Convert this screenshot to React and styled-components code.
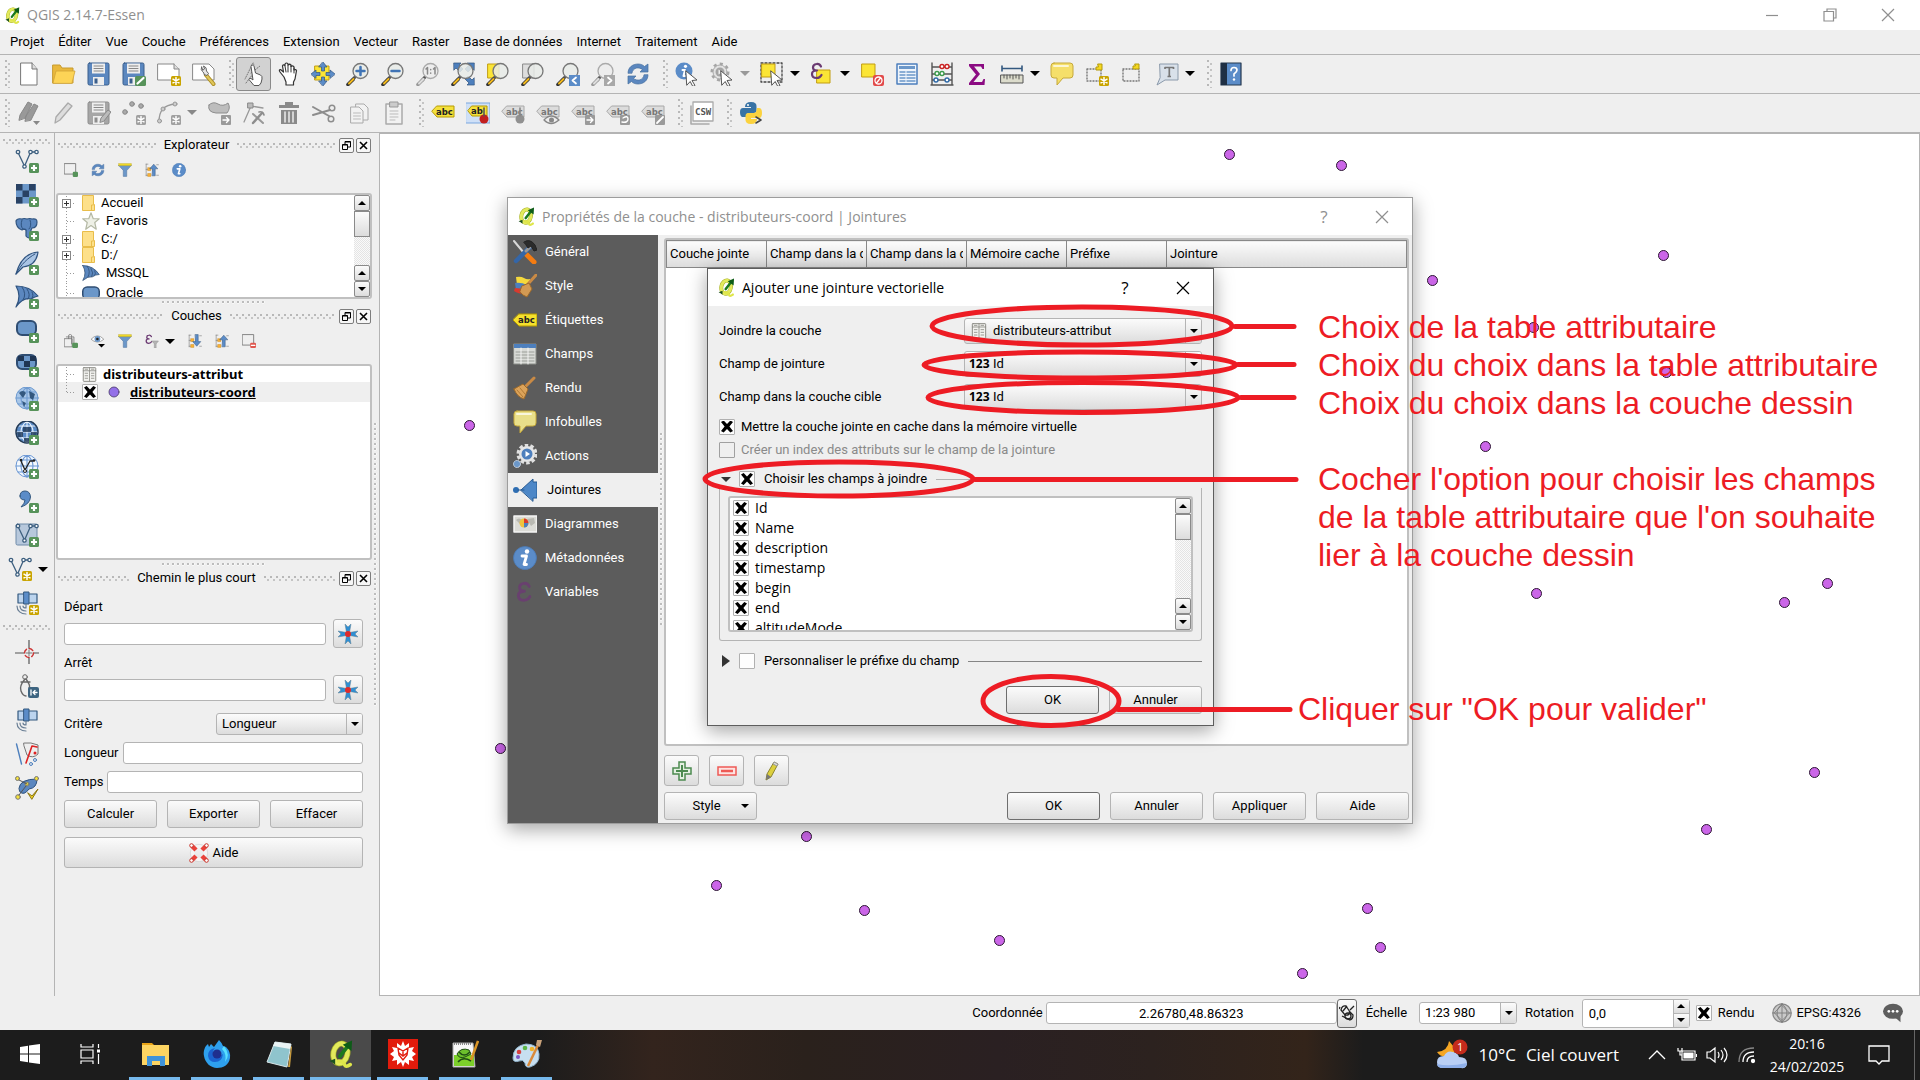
import React from "react";
import styled, { createGlobalStyle, css } from "styled-components";

/* ---------- tokens ---------- */
const UI = `Roboto, "Noto Sans", "Liberation Sans", sans-serif`;
const SYS = `"Open Sans", "Noto Sans", "Liberation Sans", sans-serif`;
const FACE = "#efefef";
const EDGE = "#b4b4b4";
const RED = "#ed1c24";

const Global = createGlobalStyle`
  *, *::before, *::after { box-sizing: border-box; }
  body { margin: 0; background: ${FACE}; font: 13px/16px ${UI}; color: #000; }
  button, input, select { font: inherit; color: inherit; margin: 0; }
  svg { display: block; flex: none; }
`;

/* ---------- icon pieces ---------- */
const Svg = ({ s = 24, children }) => (
  <svg width={s} height={s} viewBox="0 0 24 24" fill="none" strokeLinejoin="round" strokeLinecap="round" aria-hidden="true">
    {children}
  </svg>
);
const Plus = () => (
  <g><rect x="14" y="14" width="10" height="10" rx="1.5" fill="#57935a" /><path d="M19 16v6M16 19h6" stroke="#fff" strokeWidth="2.2" strokeLinecap="butt" /></g>
);
const Star = ({ c = "#c9a400", x = 0, y = 0 }) => (
  <g transform={`translate(${x} ${y})`}><rect x="14" y="14" width="10" height="10" rx="1.5" fill={c} /><path d="M19 15.500v7M16 17.200l6 3.600M22 17.200l-6 3.600" stroke="#fff" strokeWidth="1.500" /></g>
);
const ArrowBadge = ({ c = "#9a9a9a" }) => (
  <g><rect x="14" y="14" width="10" height="10" rx="1" fill={c} /><path d="M16 19h6M19.500 16.500L22 19l-2.500 2.500" stroke="#fff" strokeWidth="1.400" /></g>
);
const Lens = ({ gray, children, back }) => (
  <Svg>
    {back}
    <path d="M9 15l-3 3.500" stroke="#555" strokeWidth="3" />
    <path d="M7 17.500l-5 5" stroke={gray ? "#999" : "#333"} strokeWidth="3.600" />
    <path d="M7.500 17l-4.500 4.500" stroke={gray ? "#ddd" : "#f3b91c"} strokeWidth="2" />
    <circle cx="14.500" cy="9" r="7.500" fill={gray ? "#ececec" : "#e8ebe8"} fillOpacity=".85" stroke={gray ? "#aaa" : "#777"} strokeWidth="1.300" />
    {children}
  </Svg>
);
const Tag = ({ fill = "#f5e13c", line = "#b79b00", text = "#222", children }) => (
  <Svg>
    <path d="M6 5h17v11H6L1 10.500z" fill={fill} stroke={line} />
    <text x="5" y="13.500" fontSize="8.500" fontWeight="700" fontFamily="DejaVu Sans" fill={text}>abc</text>
    {children}
  </Svg>
);
const GTag = ({ children }) => <Tag fill="#dcdcdc" line="#a8a8a8" text="#777">{children}</Tag>;
const Cursor = ({ x = 0, y = 0 }) => (
  <path transform={`translate(${x} ${y})`} d="M11 9l11 9-5 .5 3 5-2.200 1-2.600-5L12 23z" fill="#fff" stroke="#555" strokeWidth="1" />
);
const Vee = ({ c = "#3d5f7f" }) => (
  <g stroke={c} strokeWidth="1.300"><path d="M3.500 4.500L9 16M10 16l5-11.500M17 3h3" /><circle cx="3" cy="3" r="1.700" fill="#fff" /><circle cx="15.500" cy="3" r="1.700" fill="#fff" /><circle cx="21.500" cy="3" r="1.700" fill="#fff" /><circle cx="9.500" cy="17.500" r="1.700" fill="#fff" /></g>
);
const QLogo = ({ s = 20 }) => (
  <Svg s={s}>
    <ellipse cx="11.500" cy="11.500" rx="6" ry="8.500" transform="rotate(12 11.500 11.500)" stroke="#a9b32a" strokeWidth="5" />
    <ellipse cx="11.500" cy="11.500" rx="6" ry="8.500" transform="rotate(12 11.500 11.500)" stroke="#e3ea5c" strokeWidth="3.800" />
    <path d="M10 18q4 0 5 3t5 0" stroke="#dfe64a" strokeWidth="3" />
    <path d="M11 14l7-9" stroke="#1d7a1d" strokeWidth="3.200" />
    <path d="M21.500 0.500l-.5 9-7.500-5.500z" fill="#0d5c17" />
    <path d="M2 18l5-2 0 5-2-1.500z" fill="#1c5220" />
  </Svg>
);
const Info = ({ s }) => (
  <Svg s={s}><circle cx="12" cy="12" r="11.500" fill="#5b8cc8" stroke="#4a79b4" strokeWidth=".8" /><path d="M9 10h4.500l-2.500 8.500h2.500" stroke="#fff" strokeWidth="2.800" /><circle cx="14" cy="5.500" r="2.200" fill="#fff" /></Svg>
);
const Refresh = ({ s }) => (
  <Svg s={s}>
    <path d="M2 11C2 5 7 2 12 2c3 0 5 1 6.500 2.500L22 2v8h-8l2.500-2.500C13 5 7 5 6 11z" fill="#5b87bf" stroke="#46709f" strokeWidth=".7" />
    <path d="M22 13c0 6-5 9-10 9-3 0-5-1-6.500-2.500L2 22v-8h8l-2.500 2.500C11 19 17 19 18 13z" fill="#5b87bf" stroke="#46709f" strokeWidth=".7" />
  </Svg>
);
const Funnel = ({ s }) => (
  <Svg s={s}><path d="M1 4h22l-8 9v10H9V13z" fill="#6b97c9" stroke="#4c6f98" strokeWidth=".8" /><rect x="1" y="1" width="22" height="3.500" fill="#f2dc27" stroke="#b59c10" strokeWidth=".6" /></Svg>
);
const TreeArrow = ({ s, down }) => (
  <Svg s={s}>
    <path d="M2 2v20M2 2h3M2 11h4M2 21h4M20 3h3M20 21h3" stroke="#777" />
    <rect x="5" y="8" width="5" height="5" fill="#f9b233" stroke="#c47e12" strokeWidth=".7" /><rect x="5" y="18" width="5" height="5" fill="#f9b233" stroke="#c47e12" strokeWidth=".7" />
    <path d={down ? "M12.500 1h5v12H22l-7 8-7-8h4.500z" : "M12.500 22h5V10H22l-7-8-7 8h4.500z"} fill="#5b8cc8" stroke="#32527a" strokeWidth=".8" />
  </Svg>
);
const TableIco = ({ s = 16 }) => (
  <Svg s={s}><rect x="2" y="1" width="20" height="22" rx="1" fill="#f3f3f0" stroke="#8b8b85" strokeWidth="1.500" /><path d="M2 6h20M12 1v22M5 3.500h4M15 3.500h4M5 10h4M15 10h4M5 14h4M15 14h4M5 18h4M15 18h4" stroke="#8b8b85" strokeWidth="1.300" /></Svg>
);
const Pen = ({ gray = "#aaa" }) => <path d="M3 22l1-6L16 2l4 3L8 19z" fill="#ddd" stroke={gray} strokeWidth="1.300" />;
const Sat = ({ children }) => (
  <Svg><path d="M3 3h7v9H3zM13 3h9v9h-9z" fill="#bcd4ee" stroke="#33587f" strokeWidth="1.200" /><path d="M9 1h5v12H9z" fill="#5b8cc8" stroke="#33587f" /><path d="M11 13v4M2 15c0 5 4 8 9 8M5 15c0 3 2 5 6 5M8 15c0 1 1 2 3 2" stroke="#6a7f95" strokeWidth="1.200" />{children}</Svg>
);
const Globe = ({ fill, line, children }) => (
  <Svg><circle cx="12" cy="11" r="11" fill={fill} stroke={line} /><path d="M1 11h22M3 5h18M3 17h18M12 0v22M12 0c-8 6-8 16 0 22M12 0c8 6 8 16 0 22" stroke={line} strokeWidth="1.100" />{children}</Svg>
);
const Checker = () => (
  <g fill="#294264"><rect x="1" y="1" width="6.500" height="6.500" /><rect x="14" y="1" width="6.500" height="6.500" /><rect x="7.500" y="7.500" width="6.500" height="6.500" /><rect x="1" y="14" width="6.500" height="6.500" /></g>
);
const Bubble = ({ s, c = "#f5df6a" }) => (
  <Svg s={s}><path d="M4 1h16q3 0 3 3v9q0 3-3 3h-7l-6 7v-7H4q-3 0-3-3V4q0-3 3-3z" fill={c} stroke="#c6a93a" /><path d="M4 4h14" stroke="#fff" strokeOpacity=".7" strokeWidth="2" /></Svg>
);
const Save = ({ c = "#5b87bf", l = "#3b5f8c" }) => (
  <g><rect x="1" y="1" width="21" height="22" rx="1.500" fill={c} stroke={l} /><rect x="5" y="1.500" width="13" height="10" fill="#eee" /><path d="M7 4h9M7 6.500h9M7 9h9" stroke="#888" strokeWidth="1" /><rect x="6" y="15" width="11" height="8" fill="#eee" /><rect x="7.500" y="16.500" width="3" height="5" fill={l} /></g>
);
const EPS = "M11 4.500Q9.500 1.500 6.500 2 3 2.500 3 5.500 3 8.500 7 8.500 2 8.500 2 12q0 4 4.500 4 3.500 0 5-3";
const Epsilon = ({ c = "#6b3a72" }) => <path d={EPS} stroke={c} strokeWidth="2.200" />;

const row1 = [
  [
    ["Nouveau", <Svg><path d="M4 1h11l5 6v16H4z" fill="#fff" stroke="#777" /><path d="M15 1v6h5" fill="#ddd" stroke="#777" /></Svg>],
    ["Ouvrir", <Svg><path d="M1 3h7l2 3h11v15H1z" fill="#e9b83c" stroke="#c79a2c" /><path d="M1 21L4 9h19l-3 12z" fill="#fdd456" stroke="#d1a337" strokeWidth=".8" /></Svg>],
    ["Enregistrer", <Svg><Save /></Svg>],
    ["Enregistrer sous", <Svg><Save /><rect x="13" y="14" width="11" height="10" rx="1.500" fill="#57935a" /><path d="M15.500 21.500l6-5.500" stroke="#fff" strokeWidth="2.200" /></Svg>],
    ["Nouveau composeur", <Svg><path d="M1 2h16l5 5v11H1z" fill="#fff" stroke="#888" /><path d="M17 2v5h5" stroke="#888" fill="#ddd" /><Star /></Svg>],
    ["Gestionnaire de composeurs", <Svg><path d="M1 2h16l5 5v11H1z" fill="#fff" stroke="#888" /><path d="M14 13l7.500 9" stroke="#a98a20" strokeWidth="4" /><path d="M14 13l7.500 9" stroke="#e0c65a" strokeWidth="2.200" /><path d="M9.500 5q-1 3 1 4.500t1.500 3l3 1 1.500-2-2-2.500q.5-4-3-5l1 3-1.500 1z" fill="#e6e6e6" stroke="#666" /></Svg>],
  ],
  [
    ["Toucher", <Svg><path d="M12 1L4 17M10 11l9-7M5 21l7-9" stroke="#777" strokeDasharray="1 1.500" /><path d="M11 3q1.500-1 2 1l1.500 7 5 2q2 1 1.500 4l-1 4-2 2.500h-5l-5-6q0-2 2-1l2 1.500-2-13.500q0-1.500 1-1.500z" fill="#fff" stroke="#555" /><circle cx="12" cy="2.500" r="1.300" fill="#999" /></Svg>, { on: true }],
    ["Déplacer", <Svg><path d="M8 15L4 10q-1.500-2.500.5-2.500L7.500 10 6.500 4q.5-2 2.500-.5V2q1.500-2 3 0v1q1.500-1.500 3 0v1.500q1.500-1.300 3 .3V8q2-1 2.500.7L19 17l-1.500 3v3H10v-3z" fill="#fff" stroke="#333" strokeWidth="1.200" /><path d="M9 4l1 6M12 3v7M15 4v6M18 6v5" stroke="#333" /></Svg>],
    ["Déplacer vers la sélection", <Svg><rect x="4" y="4" width="14" height="14" fill="#fbe536" stroke="#c29d10" /><path d="M12 0l4 5h-2.500v4h-3V5H8zM12 24l4-5h-2.500v-4h-3v4H8zM0 12l5-4v2.500h4v3H5V16zM24 12l-5-4v2.500h-4v3h4V16z" fill="#5b8cc8" stroke="#2f537f" strokeWidth=".7" /></Svg>],
    ["Zoom +", <Lens><path d="M14.500 5v8M10.500 9h8" stroke="#3f73b5" strokeWidth="2.500" /></Lens>],
    ["Zoom -", <Lens><path d="M10.500 9h8" stroke="#3f73b5" strokeWidth="2.500" /></Lens>],
    ["Zoom 1:1", <Lens gray><path d="M10 7l1.500-1.500V12M17.500 7L19 5.500V12M14.700 7.500v.2M14.700 11v.2" stroke="#888" strokeWidth="1.500" /></Lens>],
    ["Zoom sur l'étendue", <Lens back={<path d="M3 1h7L8 3l4 4-3 3-4-4-2 2zM23 1h-7l2 2-4 4 3 3 4-4 2 2zM23 23h-7l2-2-4-4 3-3 4 4 2-2z" fill="#4d7fbd" stroke="#2f537f" strokeWidth=".7" />} />],
    ["Zoom sur la sélection", <Lens back={<rect x="2" y="2" width="11" height="14" fill="#fbe536" stroke="#c29d10" />} />],
    ["Zoom sur la couche", <Lens back={<rect x="2" y="2" width="11" height="14" fill="#ddd" stroke="#888" />} />],
    ["Zoom précédent", <Lens><rect x="13" y="13" width="11" height="11" fill="#5b8cc8" /><path d="M20 15.500l-3.500 3 3.500 3" stroke="#fff" strokeWidth="1.800" /></Lens>],
    ["Zoom suivant", <Lens gray><rect x="13" y="13" width="11" height="11" fill="#a8a8a8" /><path d="M17 15.500l3.500 3-3.500 3" stroke="#fff" strokeWidth="1.800" /></Lens>],
    ["Rafraîchir", <Refresh />],
  ],
  [
    ["Identifier", <Svg><circle cx="9" cy="9" r="8.500" fill="#5b8cc8" /><path d="M7.500 8H10l-1.500 6H10" stroke="#fff" strokeWidth="2" /><circle cx="10.500" cy="4.300" r="1.600" fill="#fff" /><Cursor /></Svg>],
    ["Action", <Svg><circle cx="10" cy="10" r="8" stroke="#a5a5a5" strokeWidth="3" strokeDasharray="3 3.200" strokeLinecap="butt" /><circle cx="10" cy="10" r="7" stroke="#aaa" fill="#e2e2e2" /><circle cx="10" cy="10" r="4.500" fill="#a5a5a5" /><path d="M8.500 7.500l4 2.500-4 2.500z" fill="#eee" /><Cursor /></Svg>, { drop: "#999" }],
    ["Sélection", <Svg><rect x="1" y="1" width="21" height="19" stroke="#444" strokeDasharray="2 2" strokeWidth="1.300" /><rect x="2" y="2" width="13" height="13" fill="#fbe536" stroke="#c29d10" /><Cursor /></Svg>, { drop: "#000" }],
    ["Sélection par expression", <Svg><rect x="7" y="8" width="13" height="13" fill="#fbe536" stroke="#c29d10" /><Epsilon /></Svg>, { drop: "#000" }],
    ["Désélectionner", <Svg><rect x="2" y="2" width="13" height="13" fill="#fbe536" stroke="#c29d10" /><rect x="13" y="13" width="11" height="11" rx="2" fill="#e24a4a" /><circle cx="18.500" cy="18.500" r="3.500" stroke="#fff" strokeWidth="1.300" /><path d="M16.500 21l4-5" stroke="#fff" strokeWidth="1.300" /></Svg>],
    ["Table d'attributs", <Svg><rect x="2" y="2" width="20" height="20" fill="#eef4fb" stroke="#4d7fbd" strokeWidth="1.500" /><rect x="4" y="4" width="16" height="3" fill="#6b97c9" /><path d="M5 10h5M12 10h8M5 13h5M12 13h8M5 16h5M12 16h8M5 19h5M12 19h8" stroke="#6b97c9" strokeWidth="1.400" /></Svg>],
    ["Calculatrice", <Svg><path d="M2 1v22M22 1v22M2 5h20M2 12h20M2 18h20M1 23h22" stroke="#555" strokeWidth="1.400" /><g fill="#fff" strokeWidth="1.400"><g stroke="#c22"><circle cx="12" cy="4.500" r="2" /><circle cx="17" cy="4.500" r="2" /></g><g stroke="#3c9a4c"><circle cx="7" cy="11.500" r="2" /><circle cx="12" cy="11.500" r="2" /></g><g stroke="#2f6aa8"><circle cx="6" cy="18" r="2" /><circle cx="17" cy="18" r="2" /></g></g></Svg>],
    ["Statistiques", <Svg><path d="M4 2h15v5h-1.500L16 4.500H9l6 7.500-6.500 8H17l1.500-3H20l-.5 6H4v-2l7-8.500L4 4z" fill="#8b0b82" /></Svg>],
    ["Mesurer", <Svg><path d="M2 4v5M22 4v5M2 6.500h20" stroke="#33587f" strokeWidth="1.600" /><rect x="1" y="13" width="22" height="8" fill="#dcdccc" stroke="#555" /><path d="M4 13v3M7 13v4M10 13v3M13 13v4M16 13v3M19 13v4" stroke="#555" /></Svg>, { drop: "#000" }],
    ["Infobulles", <Bubble />],
    ["Nouveau signet", <Svg><path d="M2 7h14v12H2z" stroke="#777" strokeDasharray="1 2" strokeWidth="1.400" /><path d="M13 2h4v6h-6V5h2z" fill="#f5d820" stroke="#b39a0d" /><Star /></Svg>],
    ["Signets", <Svg><path d="M3 7h16v12H3z" stroke="#777" strokeDasharray="1 2" strokeWidth="1.400" /><path d="M15 2h4v5h-6V4h2z" fill="#f5d820" stroke="#b39a0d" /></Svg>],
    ["Annotation", <Svg><path d="M5 2h18v16H10l-8 5 3-7z" fill="#d9e1ea" stroke="#8b9aab" /><path d="M10 7V5.500h8.500V7M14.300 5.500v9M12.500 14.500h3.500" stroke="#777" strokeWidth="1.700" strokeLinecap="butt" /></Svg>, { drop: "#000" }],
  ],
  [["Aide", <Svg><rect x="2" y="1" width="20" height="22" fill="#5b8cc8" stroke="#25384f" strokeWidth="1.200" /><rect x="2" y="1" width="6" height="22" fill="#1f2f44" /><path d="M12 8.500q0-3 3-3t3 2.500q0 2-3 4v2" stroke="#fff" strokeWidth="1.700" /><circle cx="15" cy="17.500" r="1.200" fill="#fff" /></Svg>]],
];

const row2 = [
  [
    ["Modifications", <Svg><path d="M2 19l1-5L11 1l4 2-7 14zM8 20l1-5L17 3l4 2-7 14z" fill="#999" stroke="#888" /><path d="M16 20h7l-3.500 4z" fill="#888" /></Svg>],
    ["Basculer en édition", <Svg><Pen /></Svg>],
    ["Enregistrer les modifications", <Svg><Save c="#a6a6a6" l="#8d8d8d" /><path d="M13 21l1-4 7-8 3 2-7 9z" fill="#bbb" stroke="#888" /></Svg>],
    ["Ajouter une entité", <Svg><circle cx="3" cy="11" r="2.300" fill="#aaa" stroke="#888" /><circle cx="10" cy="3" r="2.300" fill="#aaa" stroke="#888" /><circle cx="19" cy="5" r="2.300" fill="#aaa" stroke="#888" /><Star c="#a0a0a0" /></Svg>],
    ["Ajouter une courbe", <Svg><path d="M2 21C2 10 6 4 19 3" stroke="#999" strokeWidth="1.300" /><circle cx="2.500" cy="20" r="2" fill="#ccc" stroke="#999" /><circle cx="6" cy="8" r="2" fill="#ccc" stroke="#999" /><circle cx="18" cy="3" r="2" fill="#ccc" stroke="#999" /><Star c="#a0a0a0" /></Svg>, { drop: "#888" }],
    ["Déplacer une entité", <Svg><path d="M2 4q4-4 9-1t10-1q3 5-1 10H9q-9-1-7-8z" fill="#bdbdbd" stroke="#8d8d8d" /><ArrowBadge /></Svg>],
    ["Outil de nœud", <Svg><path d="M2 21L9 5l12 2" stroke="#999" strokeWidth="1.300" /><rect x="6" y="2" width="5" height="5" fill="#bbb" stroke="#888" /><path d="M11 13l10 9" stroke="#999" strokeWidth="2" /><path d="M20 12l-9 10" stroke="#8d8d8d" strokeWidth="2.400" /><path d="M17 11q4-1 5 3" stroke="#8d8d8d" strokeWidth="1.600" /></Svg>],
    ["Supprimer", <Svg><path d="M2 4h20v3H2zM8 1h8v3H8zM4 9h16v14H4z" fill="#8a8a8a" /><path d="M8 11v10M12 11v10M16 11v10" stroke="#ededed" strokeWidth="1.500" /></Svg>],
    ["Couper", <Svg><path d="M1 6l16 9M1 14l17-5" stroke="#8d8d8d" strokeWidth="2" /><circle cx="20" cy="7" r="2.800" stroke="#8d8d8d" strokeWidth="1.500" /><circle cx="19" cy="18" r="2.800" stroke="#8d8d8d" strokeWidth="1.500" /></Svg>],
    ["Copier", <Svg><path d="M9 3h8l4 4v12H9z" fill="#f2f2f2" stroke="#aaa" /><path d="M4 6h8l4 4v12H4z" fill="#f2f2f2" stroke="#aaa" /><path d="M6.500 12h7M6.500 15h7M6.500 18h7" stroke="#bbb" /></Svg>],
    ["Coller", <Svg><path d="M4 3h16v20H4z" fill="#f2f2f2" stroke="#aaa" strokeWidth="1.500" /><path d="M8 1h8v5H8z" fill="#ccc" stroke="#999" /><path d="M8 10h8M8 13h8M8 16h8M8 19h5" stroke="#bbb" /></Svg>],
  ],
  [
    ["Étiquettes", <Tag />],
    ["Étiquettes épinglées", <Svg><rect x="0" y="2" width="24" height="20" fill="#cfe0f7" stroke="#7ba7df" /><path d="M6 5h15v10H6L2 10z" fill="#f5e13c" stroke="#b79b00" /><text x="5" y="13" fontSize="8.500" fontWeight="700" fontFamily="DejaVu Sans" fill="#222">ab</text><circle cx="18" cy="18" r="4.500" fill="#c22020" /><path d="M18 7v8" stroke="#555" strokeWidth="1.600" /></Svg>],
    ["Épingler", <GTag><circle cx="19" cy="18" r="4.500" fill="#909090" /><path d="M19 7v8" stroke="#888" strokeWidth="1.600" /></GTag>],
    ["Afficher", <GTag><path d="M8 19q7-8 15 0-8 7-15 0z" fill="#eee" stroke="#888" strokeWidth="1.300" /><circle cx="15.500" cy="19" r="2.500" fill="#888" /></GTag>],
    ["Déplacer l'étiquette", <GTag><ArrowBadge /></GTag>],
    ["Tourner l'étiquette", <GTag><rect x="14" y="14" width="10" height="10" rx="1" fill="#9a9a9a" /><path d="M16 21q6 1 6-3t-5-1" stroke="#fff" strokeWidth="1.400" /></GTag>],
    ["Modifier l'étiquette", <GTag><rect x="14" y="14" width="10" height="10" rx="1" fill="#9a9a9a" /><path d="M16 22l6-6" stroke="#fff" strokeWidth="1.800" /></GTag>],
  ],
  [["CSW", <Svg><path d="M1 5v18h18" stroke="#aaa" strokeWidth="1.600" /><rect x="3" y="1" width="20" height="19" fill="#fff" stroke="#aaa" strokeWidth="1.300" /><text x="5" y="14" fontSize="9" fontWeight="700" fontFamily="DejaVu Sans Mono" fill="#555">CSW</text></Svg>]],
  [["Console Python", <Svg><path d="M6 6q0-5 6-5t5.500 5v4q0 2-2.500 2h-5q-3 0-3 4H3q-2-1-2-5t3-4h8V6z" fill="#3873a5" /><path d="M18 7h2q3 0 3 5t-3 5h-8v1h6q0 5-6 5t-5.500-5v-3q0-3 3-3h5q3 0 3-3z" fill="#fbd23e" /><circle cx="9" cy="4" r="1" fill="#fff" /><path d="M17 16l5 3-5 3" stroke="#444" strokeWidth="1.500" /></Svg>]],
];

const layerTools = [
  ["Couche vecteur", <Svg><Vee /><Plus /></Svg>],
  ["Couche raster", <Svg><rect x="1" y="1" width="20" height="19.500" fill="#6b97c9" /><Checker /><Plus /></Svg>],
  ["PostGIS", <Svg><path d="M1 4q1-3 6-2 2-1 5 0 3-1 5 0 5-1 5 3 0 6-5 6l-1 2v7q-3 2-5-1v-6q-1-2-4 0Q1 11 1 4z" fill="#5b87bf" stroke="#2f537f" strokeWidth="1.200" /><path d="M7 3q-2 6 1 9l3 1M15 3q2 6-1 9" stroke="#2f537f" /><Plus /></Svg>],
  ["SpatiaLite", <Svg><path d="M1 23C4 12 10 2 23 1c-1 8-6 14-15 15z" fill="#a9c4e4" stroke="#2f537f" strokeWidth="1.200" /><path d="M1 23C6 13 13 7 20 3" stroke="#2f537f" /><Plus /></Svg>],
  ["MSSQL", <Svg><path d="M1 1q14 0 22 10-4 1-7 3-8-2-15 8Q7 11 1 1z" fill="#5b87bf" stroke="#2f537f" strokeWidth="1.200" /><path d="M7 2q5 7 1 13M12 4q4 6 1 10M17 7q2 4 0 6" stroke="#2f537f" /><Plus /></Svg>],
  ["Oracle", <Svg><rect x="2" y="2" width="19" height="14" rx="5" fill="#6b97c9" stroke="#2f4d72" strokeWidth="2" /><Plus /></Svg>],
  ["Oracle raster", <Svg><rect x="2" y="2" width="19" height="14" rx="5" fill="#6b97c9" stroke="#2f4d72" strokeWidth="2" /><path d="M3 3h6v5H3zM15 3h6v5h-6zM9 8h6v6H9z" fill="#1f3553" /><Plus /></Svg>],
  ["WMS", <Globe fill="#a9c7e8" line="#6f9bd0"><path d="M4 6q4-4 7 0l-3 5zM14 4l6 3-2 6-3-2zM7 14l4 2-2 4z" fill="#33587f" /><Plus /></Globe>],
  ["WCS", <Globe fill="#5b8cc8" line="#eaf2fb"><circle cx="12" cy="11" r="11" stroke="#223a57" strokeWidth="1.500" /><path d="M8 6h8v5H8zM2 11h6v5H3zM16 11h6l-1 5h-5zM9 17h6v4H9z" fill="#223a57" fillOpacity=".8" /><Plus /></Globe>],
  ["WFS", <Globe fill="#f3f8fd" line="#6b97d4"><path d="M6 6l4 9 5-9h3" stroke="#222" strokeWidth="1.300" /><circle cx="6" cy="5" r="1.300" fill="#222" /><circle cx="10" cy="16" r="1.500" fill="#fff" stroke="#222" /><circle cx="19" cy="5.500" r="1.300" fill="#222" /><Plus /></Globe>],
  ["Texte délimité", <Svg><path d="M5 7q0-5 5-5t5.500 6Q15 15 6 18q4-4 4-7-5 0-5-4z" fill="#5b8cc8" stroke="#33587f" /><Plus /></Svg>],
  ["Couche virtuelle", <Svg><rect x="1" y="1" width="21" height="21" rx="1.500" fill="#b7c8dc" stroke="#6f8aa8" /><Vee /><Plus /></Svg>],
  ["Nouvelle couche", <Svg><Vee /><Star /></Svg>, { drop: "#000" }],
  ["GPS", <Sat><Star /></Sat>],
];
const pluginTools = [
  ["Saisie de coordonnées", <Svg><path d="M14 0v24M0 13h24" stroke="#555" strokeWidth="1.200" /><circle cx="14" cy="13" r="4.500" stroke="#c33" strokeWidth="1.500" strokeDasharray="4 3" fill="#efefef" /><path d="M14 10v6M11 13h6" stroke="#777" /></Svg>],
  ["GPS outils", <Svg><circle cx="10" cy="3" r="2.300" stroke="#666" /><path d="M10 5Q4 12 6 17t5 5M11 5q5 7 3 9M6 8h9" stroke="#666" strokeWidth="1.400" /><rect x="13" y="13" width="11" height="11" rx="2" fill="#3d6480" /><path d="M16 16v5M18 18.500h4M20 16.500l-2 2 2 2" stroke="#fff" strokeWidth="1.300" /></Svg>],
  ["GPS temps réel", <Sat />],
  ["Topologie", <Svg><path d="M1.500 2l5 20" stroke="#4d7fbd" strokeWidth="1.400" /><path d="M9 1q7-1 14 2v9q-5 5-11 1L9 4z" fill="#eee" stroke="#777" /><path d="M11 21l6-17 5 1" stroke="#d22" strokeWidth="1.600" /><circle cx="20" cy="11" r="1.500" fill="#d22" /><circle cx="20" cy="18" r="1.500" stroke="#4d7fbd" /><circle cx="16" cy="22" r="1.500" stroke="#4d7fbd" /></Svg>],
  ["Vérificateur", <Svg><path d="M4 12q1-9 18-9 0 9-8 10-5 7-9 3z" fill="#5b87bf" stroke="#2f537f" /><g fill="#f5e13c" stroke="#777"><circle cx="2.500" cy="2.500" r="2" /><circle cx="21.500" cy="2.500" r="2" /><circle cx="12" cy="8" r="2" /><circle cx="3" cy="21" r="2.300" /></g><path d="M4 4l8 4M11 10l-7 9" stroke="#555" /><path d="M13 17l4 3 6-7-6 10z" fill="#f5d820" stroke="#8a7410" /></Svg>],
];

/* ---------- shared controls ---------- */
const raised = css`background: linear-gradient(#fbfbfb, #e9e9e9 60%, #dcdcdc);`;
const dots = css`
  background-image: radial-gradient(circle at 1px 1px, #b8b8b8 1px, transparent 1.5px), radial-gradient(circle at 1px 1px, #c4c4c4 1px, transparent 1.5px);
  background-size: 6px 6px;
  background-position: 0 0, 3px 3px;
`;
const VGrip = styled.span`flex: none; width: 5px; height: 28px; ${dots}`;
const HGrip = styled.span`flex: ${(p) => (p.$w ? "none" : 1)}; width: ${(p) => (p.$w ? p.$w + "px" : "auto")}; height: 5px; ${dots}`;
const Tri = styled.span`
  width: 0; height: 0; flex: none;
  border: 5px solid transparent;
  ${(p) => (p.$up ? "border-bottom-color: #000; border-top: 0;" : `border-top-color: ${p.$c || "#000"}; border-bottom: 0;`)}
  ${(p) => p.$small && "border-width: " + (p.$up ? "0 4px 4px" : "4px 4px 0") + ";"}
`;
const Push = styled.button`
  ${raised}
  flex: none;
  width: ${(p) => (p.$w ? p.$w + "px" : "auto")};
  height: ${(p) => p.$h || 28}px;
  padding: 0;
  border: 1px solid ${(p) => (p.$main ? "#6e6e6e" : EDGE)};
  border-radius: 3px;
  display: flex; align-items: center; justify-content: center; gap: ${(p) => p.$gap || 4}px;
`;
const Field = styled.input`
  flex: 1; min-width: 0; width: 100%; height: 22px; padding: 0 6px;
  border: 1px solid ${EDGE}; border-radius: 3px; background: #fff; text-align: ${(p) => p.$align || "left"};
`;
const ComboBox = styled.span`
  position: relative; display: block; flex: none; width: ${(p) => p.$w}px; height: ${(p) => p.$h || 22}px;
  & > select {
    appearance: none; width: 100%; height: 100%;
    padding: 0 18px 0 ${(p) => p.$pad || 5}px;
    border: 1px solid ${EDGE}; border-radius: 3px;
    ${(p) => (p.$white ? "background: #fff;" : raised)}
  }
`;
const FieldWrap = styled.span`display: flex; flex: none; width: 291px;`;
const ComboArrow = styled.span`
  position: absolute; right: 1px; top: 1px; bottom: 1px; width: 16px;
  border-left: 1px solid ${EDGE}; border-radius: 0 2px 2px 0; pointer-events: none;
  display: flex; align-items: center; justify-content: center; ${raised}
`;
const ComboMark = styled.span`
  position: absolute; left: ${(p) => p.$x}px; top: 0; bottom: 0; display: flex; align-items: center; pointer-events: none;
  font: 700 12px/16px "Noto Sans", sans-serif;
`;
const Combo = ({ w, h, white, pad, mark, markX = 5, id, value }) => (
  <ComboBox $w={w} $h={h} $white={white} $pad={pad}>
    <select id={id} defaultValue={value}><option>{value}</option></select>
    {mark && <ComboMark $x={markX}>{mark}</ComboMark>}
    <ComboArrow><Tri $small /></ComboArrow>
  </ComboBox>
);
const Check = styled.input.attrs({ type: "checkbox" })`
  appearance: none; flex: none; width: 16px; height: 16px; margin: 0;
  border: 1px solid ${(p) => (p.disabled ? "#a0a0a0" : "#b0b0b0")}; border-radius: 1px;
  background: ${(p) => (p.disabled ? FACE : "#fdfdfd")};
  &:checked::after {
    content: ""; display: block; width: 12px; height: 12px; margin: 1px; background: #000;
    clip-path: polygon(0 12%, 22% 0, 50% 30%, 78% 0, 100% 12%, 70% 50%, 100% 88%, 78% 100%, 50% 70%, 22% 100%, 0 88%, 30% 50%);
  }
`;
const Scroll = styled.span`
  flex: none; width: 16px; display: flex; flex-direction: column;
  background: repeating-conic-gradient(#e4e4e4 0 25%, #fafafa 0 50%) 0 0 / 2px 2px;
`;
const ScrollBtn = styled.button`
  ${raised} width: 16px; height: 16px; padding: 0; border: 1px solid #8a8a8a; border-radius: 2px;
  display: flex; align-items: center; justify-content: center;
`;
const Thumb = styled.span`${raised} height: 26px; border: 1px solid #8a8a8a; margin-bottom: auto;`;
const ScrollBar = () => (
  <Scroll>
    <ScrollBtn aria-label="Haut"><Tri $up $small /></ScrollBtn><Thumb />
    <ScrollBtn aria-label="Page haut"><Tri $up $small /></ScrollBtn><ScrollBtn aria-label="Bas"><Tri $small /></ScrollBtn>
  </Scroll>
);

/* ---------- main window ---------- */
const Desktop = styled.div`position: relative; min-height: 100vh; display: flex; flex-direction: column; overflow: hidden;`;
const TitleBar = styled.header`
  height: ${(p) => p.$h || 30}px; background: #fff; flex: none; display: flex; align-items: center; gap: 6px;
  padding: 0 ${(p) => p.$end || 4}px 0 ${(p) => p.$pad || 0}px; font: 14px/20px ${SYS}; color: ${(p) => (p.$active ? "#000" : "#8f8f8f")};
`;
const WinTitle = styled.h1`flex: 1; margin: 0; font: inherit;`;
const Caption = styled.button`
  width: 52px; height: 100%; border: 0; padding: 0; background: none; font: 17px/20px ${SYS};
  display: flex; align-items: center; justify-content: center;
`;
const CapIcon = ({ d }) => <svg width="14" height="14" viewBox="0 0 14 14" fill="none" stroke="currentColor" strokeWidth="1.200"><path d={d} /></svg>;
const CROSS = "M1 1l12 12M13 1L1 13";

const MenuBar = styled.nav`height: 25px; flex: none; padding-left: 10px; display: flex; align-items: center; gap: 14px; border-bottom: 1px solid ${EDGE};`;
const MenuLink = styled.a`color: #000; text-decoration: none;`;
const ToolRow = styled.div`height: 39px; flex: none; display: flex; align-items: center; border-bottom: 1px solid ${EDGE}; padding-bottom: 1px;`;
const GripSlot = styled.span`width: ${(p) => (p.$first ? 12 : 14)}px; display: flex; justify-content: flex-end; padding-right: 2px;`;
const Tool = styled.button`
  width: ${(p) => (p.$drop ? 50 : 35)}px; height: 34px; padding: 0 0 0 4px; flex: none;
  border: 1px solid ${(p) => (p.$on ? "#8a8a8a" : "transparent")}; border-radius: 3px;
  background: ${(p) => (p.$on ? "#d2d2d2" : "none")}; display: flex; align-items: center; gap: 6px;
`;
const Tools = ({ groups, label }) => (
  <ToolRow role="toolbar" aria-label={label}>
    {groups.map((g, i) => (
      <React.Fragment key={i}>
        <GripSlot $first={i === 0}><VGrip /></GripSlot>
        {g.map(([name, icon, o = {}]) => (
          <Tool key={name} aria-label={name} $drop={o.drop} $on={o.on}>{icon}{o.drop && <Tri $c={o.drop} />}</Tool>
        ))}
      </React.Fragment>
    ))}
  </ToolRow>
);
const Main = styled.main`flex: 1; display: flex; min-height: 0;`;
const SideTools = styled.div`
  width: 55px; flex: none; border-right: 1px solid ${EDGE}; padding: 6px 3px 0;
  display: flex; flex-direction: column;
`;
const SideTool = styled.button`
  height: 34px; width: 100%; border: 0; background: none; flex: none; display: flex; align-items: center; gap: 6px;
  padding: 0 0 0 ${(p) => (p.$drop ? 5 : 12)}px;
`;
const GripLine = styled.span`display: flex; height: ${(p) => p.$h}px; flex: none; align-items: center; justify-content: center;`;
const Docks = styled.aside`width: 317px; flex: none; display: flex; flex-direction: column; padding-top: 2px;`;
const DockHead = styled.header`height: 20px; display: flex; align-items: center; gap: 8px; padding-left: 3px; flex: none;`;
const DockTitle = styled.h2`margin: 0; font: inherit;`;
const DockBtns = styled.span`display: flex; gap: 2px; margin-left: -4px; padding-right: 1px;`;
const DockBtn = styled.button`
  width: 15px; height: 15px; padding: 0; border: 1px solid #7d7d7d; border-radius: 2px; background: #f6f6f6;
  display: flex; align-items: center; justify-content: center;
`;
const Dock = ({ title, children }) => (
  <>
    <DockHead>
      <HGrip /><DockTitle>{title}</DockTitle><HGrip />
      <DockBtns>
        <DockBtn aria-label="Détacher"><svg width="9" height="9" viewBox="0 0 9 9" fill="none" stroke="#000"><path d="M3 3V.5h5.500V6H6M3 1h5.500M.5 3.500h5v5h-5zM.5 4h5" /></svg></DockBtn>
        <DockBtn aria-label="Fermer"><svg width="9" height="9" viewBox="0 0 9 9" stroke="#000" strokeWidth="1.600"><path d="M1 1l7 7M8 1L1 8" /></svg></DockBtn>
      </DockBtns>
    </DockHead>
    {children}
  </>
);
const DockTools = styled.div`height: 38px; flex: none; display: flex; align-items: center; gap: 13px; padding: 0 0 8px 9px;`;
const MiniTool = styled.button`border: 0; padding: 0; background: none; display: flex; align-items: center; gap: 6px;`;
const Box = styled.div`
  flex: none; height: ${(p) => p.$h}px; margin-left: 1px; background: #fff; border: 2px solid #c0c0c0; border-radius: 3px; display: flex; overflow: hidden;
`;
const Tree = styled.ul`list-style: none; margin: 0; padding: 0; flex: 1; overflow: hidden;`;
const Node = styled.li`
  height: ${(p) => p.$h}px; display: flex; align-items: center; padding-left: 1px; gap: 6px;
  background: ${(p) => (p.$sel ? FACE : "none")};
  font: ${(p) => (p.$bold ? `700 13px/18px "Noto Sans", sans-serif` : "inherit")};
  text-decoration: ${(p) => (p.$sel ? "underline" : "none")};
`;
const Twig = ({ plus, last }) => (
  <svg width="17" height="20" viewBox="0 0 17 20" fill="none" stroke="#999">
    <path d={last ? "M7.500 0v10" : "M7.500 0v20"} strokeDasharray="1 2" /><path d="M8 10.500h9" strokeDasharray="1 2" />
    {plus && <g><rect x="3.500" y="6.500" width="8" height="8" fill="#fff" stroke="#888" /><path d="M5 10.500h5M7.500 8v5" stroke="#333" /></g>}
  </svg>
);
const Folder = () => <svg width="13" height="16" viewBox="0 0 13 16"><path d="M.5.500h11v9h1v6H.5z" fill="#fde08a" stroke="#e9bd4a" /><path d="M9.500 15.500V10h2" fill="none" stroke="#e9bd4a" /></svg>;

const Form = styled.form`display: flex; flex-direction: column; padding: 10px 9px 0;`;
const Row = styled.div`display: flex; align-items: center; gap: ${(p) => p.$gap || 7}px; height: ${(p) => p.$h || 29}px;`;
const Lbl = styled.label`flex: none; ${(p) => p.$block && "height: 21px; line-height: 18px;"} ${(p) => p.$push && "margin-right: auto;"}`;
const Bottom = styled.div`display: grid; grid-template-columns: repeat(3, 1fr); gap: 9px 10px; padding-top: 4px; & > :last-child { grid-column: 1 / -1; }`;
const SplitV = styled.div`width: ${(p) => p.$w || 7}px; flex: none; display: flex; align-items: center; justify-content: center;`;
const Dotted = styled.span`
  width: ${(p) => (p.$v ? 3 : 104)}px; height: ${(p) => (p.$v ? p.$v : 3)}px;
  background: radial-gradient(circle at 1px 1px, #bdbdbd 1px, #fafafa 1.5px, transparent 2px) 0 0 / 5px 5px;
`;
const MapView = styled.section`position: relative; flex: 1; background: #fff; border: 1px solid ${EDGE};`;
const Pin = styled.i`
  position: absolute; left: ${(p) => p.$x}px; top: ${(p) => p.$y}px; width: 11px; height: 11px; margin: -6px;
  border: 1px solid #2c1633; border-radius: 50%; background: #cb66e8;
`;
const pins = [[1230, 155], [1342, 166], [1664, 256], [1433, 281], [1534, 328], [1667, 373], [1486, 447], [470, 426], [1537, 594], [1785, 603], [1828, 584], [501, 749], [1815, 773], [1707, 830], [807, 837], [717, 886], [865, 911], [1000, 941], [1368, 909], [1381, 948], [1303, 974]];

/* ---------- status bar and taskbar ---------- */
const Status = styled.footer`height: 34px; flex: none; display: flex; align-items: center; justify-content: flex-end; padding-right: 17px;`;
const Gap = styled.span`width: ${(p) => p.$w || 0}px; height: ${(p) => p.$h || 0}px; flex: none; display: block;`;
const Spin = styled.span`
  display: grid; grid-template-columns: 1fr 16px; width: 108px; height: 29px; border: 1px solid ${EDGE}; border-radius: 3px; background: #fff;
  & > input { border: 0; height: 27px; }
`;
const SpinCol = styled.span`display: grid; border-left: 1px solid ${EDGE};`;
const SpinBtn = styled.button`border: 0; padding: 0; ${raised} display: flex; align-items: center; justify-content: center; & + & { border-top: 1px solid ${EDGE}; }`;
const TaskBar = styled.footer`
  height: 50px; flex: none; display: flex; align-items: stretch; color: #fff; font: 14px/23px ${SYS};
  background: linear-gradient(90deg, #1c1c1c 0 28%, #33241d 34%, #2a211c 42%, #2a2022 52%, #2c221f 60%, #33241a 68%, #1c1c1c 71% 100%);
`;
const Task = styled.button`
  width: ${(p) => p.$w}px; margin-right: ${(p) => p.$m || 0}px; height: 50px; border: 0; padding: 0;
  background: ${(p) => (p.$on ? "#4a4a4a" : "none")}; border-bottom: 3px solid ${(p) => (p.$open ? "#76b9ed" : "transparent")};
  display: flex; align-items: center; justify-content: center; color: #fff;
`;
const Tray = styled.div`margin-left: auto; display: flex; align-items: center; padding-right: 5px;`;
const Weather = styled.span`display: flex; align-items: center; gap: 10px; font: 17px/24px ${SYS}; margin-right: 29px;`;
const Clock = styled.time`display: flex; flex-direction: column; align-items: center; width: 84px; margin: 0 19px 0 9px;`;

/* ---------- dialogs ---------- */
const Dialog = styled.section`
  position: absolute; left: ${(p) => p.$x}px; top: ${(p) => p.$y}px; width: ${(p) => p.$w}px;
  border: 1px solid ${(p) => (p.$front ? "#5d5d5d" : "#9d9d9d")}; background: ${FACE};
  box-shadow: 0 5px 18px rgba(0, 0, 0, 0.36);
`;
const Split = styled.div`display: flex;`;
const Tabs = styled.nav`width: 150px; height: 588px; background: #5c5c5c; flex: none;`;
const Tab = styled.a`
  display: flex; align-items: center; gap: ${(p) => (p.$on ? 10 : 8)}px; height: 34px; padding-left: 5px; text-decoration: none;
  color: ${(p) => (p.$on ? "#000" : "#fff")}; background: ${(p) => (p.$on ? FACE : "none")};
`;
const IcoBox = styled.span`width: 24px; height: 24px; display: flex; align-items: center; justify-content: center;`;
const Pane = styled.div`flex: 1; display: flex; flex-direction: column; padding: 3px 3px 2px 0;`;
const JoinBox = styled.div`height: 508px; background: #fff; border: 2px solid #c0c0c0; border-radius: 3px;`;
const JoinTable = styled.table`
  width: 100%; table-layout: fixed; border-collapse: collapse;
  & th { ${raised} height: 27px; padding: 0 3px; border: 1px solid #888; text-align: left; font-weight: 400; white-space: nowrap; overflow: hidden; }
  & th span { display: block; overflow: hidden; }
`;
const BtnRow = styled.div`display: flex; gap: 10px; padding-top: ${(p) => p.$t}px;`;
const Spacer = styled.span`flex: 1;`;
const Body = styled.div`padding: 8px 11px 11px;`;
const FormLine = styled.div`display: flex; align-items: center; justify-content: space-between; height: 33px;`;
const CheckLine = styled.label`display: flex; align-items: center; gap: 6px; height: 23px; color: ${(p) => (p.$off ? "#8a8a8a" : "#000")};`;
const GroupHead = styled.div`
  flex: 1; display: flex; align-items: center; gap: 9px; height: 20px; padding-left: 3px;
  & > hr { flex: 1; margin: 0; border: 0; border-top: 1px solid ${(p) => (p.$dark ? "#858585" : EDGE)}; }
`;
const Expand = styled.button`border: 0; background: none; padding: 0; width: 8px; display: flex; justify-content: center;`;
const GroupBody = styled.div`border: 1px solid ${EDGE}; border-top: 0; border-radius: 0 0 3px 3px; margin-top: -1px; padding: 8px;`;
const FieldBox = styled.div`height: 136px; display: flex; background: #fff; border: 2px solid #c0c0c0; border-radius: 3px;`;
const FieldList = styled.ul`
  flex: 1; list-style: none; margin: 0; padding: 0 0 0 3px; overflow: hidden; font: 14px/20px ${SYS};
  & label { display: flex; align-items: center; gap: 6px; height: 20px; }
`;

/* ---------- notes drawn over the windows ---------- */
const Notes = styled.div`position: absolute; inset: 0; pointer-events: none;`;
const Ink = styled.svg`position: absolute; left: 0; top: 0; overflow: visible;`;
const Note = styled.p`
  position: absolute; left: ${(p) => p.$x}px; top: ${(p) => p.$y}px; margin: 0; white-space: pre-line;
  font: 32px/38px "Liberation Sans", Arial, sans-serif; color: ${RED};
`;

const tabs = [
  ["Général", <Svg><path d="M1 1l10 12" stroke="#d8d8d8" strokeWidth="2" /><path d="M12 13l9 9" stroke="#f47c12" strokeWidth="5" /><path d="M17 7L3 21" stroke="#3466a8" strokeWidth="4.500" /><path d="M17 7l-4 4" stroke="#999" strokeWidth="3" /><path d="M11 2q6-4 11 3l2 5-3 1-3-5-3 2-2-3z" fill="#2b2b2b" stroke="#222" /></Svg>],
  ["Style", <Svg><path d="M3 3q5-1 8 1t6 1v6H4z" fill="#f5d93c" /><path d="M2 9q6-1 12 2v5H3z" fill="#4d7fbd" /><path d="M2 14q5 0 12 2l-2 4q-7 0-11-3z" fill="#d83a2f" /><path d="M23 1l-8 9" stroke="#c98a45" strokeWidth="3" /><path d="M9 12l7-3 3 6-5 8q-4-1-7-5z" fill="#d29a54" stroke="#9c6a2b" /></Svg>],
  ["Étiquettes", <Svg><path d="M6 6h18v12H6L0 12z" fill="#f5e02c" stroke="#b79b00" /><text x="5" y="15" fontSize="8.500" fontWeight="700" fontFamily="DejaVu Sans" fill="#222">abc</text></Svg>],
  ["Champs", <Svg><rect x="1" y="2" width="22" height="20" fill="#d8dad6" stroke="#8a8d88" /><rect x="1" y="2" width="22" height="4" fill="#4d7fbd" /><path d="M3 10h18M3 13h18M3 16h18M3 19h18" stroke="#9a9d98" /><path d="M8 6v16M15 6v16" stroke="#f5f5f5" /></Svg>],
  ["Rendu", <Svg><path d="M21 2l-8 8" stroke="#c98a45" strokeWidth="3" /><path d="M1 13l9-5 5 5-4 10q-7-2-10-10z" fill="#dca35a" stroke="#9c6a2b" /><path d="M4 14l6 7M7 12l5 6" stroke="#b07a35" /></Svg>],
  ["Infobulles", <Bubble c="#e9df8a" />],
  ["Actions", <Svg><circle cx="14" cy="10" r="9" stroke="#e0e0e0" strokeWidth="3" strokeDasharray="3.500 2.200" strokeLinecap="butt" /><circle cx="14" cy="10" r="8" fill="#e6e6e6" /><circle cx="14" cy="10" r="5.500" fill="#4d7fbd" /><path d="M12.500 7l4.500 3-4.500 3z" fill="#fff" /><circle cx="4" cy="20" r="3.500" fill="#6b97c9" stroke="#cfd8e3" strokeDasharray="1.500 1" /></Svg>],
  ["Jointures", <Svg><path d="M8 12L20 1v3h4v16h-4v3z" fill="#4d87c7" stroke="#275a92" /><circle cx="3" cy="12" r="3" fill="#2f6eb3" /><path d="M5 12h6" stroke="#275a92" /></Svg>],
  ["Diagrammes", <Svg><rect x="1" y="4" width="23" height="16" fill="#dcdcd7" stroke="#f5f5f5" strokeWidth="1.500" /><path d="M3 8q3-3 6 0l-2 4zM14 7l7-1 1 5-4 3z" fill="#b9b9b2" /><circle cx="11" cy="11" r="4.500" fill="#f0c33c" /><path d="M11 11V6.500a4.500 4.500 0 0 1 4.500 4.500z" fill="#d83a2f" /><path d="M11 11h4.500a4.500 4.500 0 0 1-4.500 4.500z" fill="#4d7fbd" /></Svg>],
  ["Métadonnées", <Info />],
  ["Variables", <Svg><g transform="translate(3 1) scale(1.2)"><path d={EPS} stroke="#69406f" strokeWidth="2.400" /></g></Svg>],
];
const fields = ["Id", "Name", "description", "timestamp", "begin", "end", "altitudeMode"];

const PickIcon = () => (
  <svg width="20" height="20" viewBox="0 0 20 20" aria-hidden="true"><path d="M7 0l3 3 3-3-1.500 8.500L20 7l-3 3 3 3-8.500-1.500L13 20l-3-3-3 3 1.500-8.500L0 13l3-3-3-3 8.500 1.500z" fill="#2f8fd3" stroke="#5f7f93" strokeWidth=".5" /><circle cx="10" cy="10" r="3" fill="#e02b2b" /></svg>
);
const Buoy = () => (
  <svg width="20" height="20" viewBox="0 0 20 20" fill="none" aria-hidden="true"><circle cx="10" cy="10" r="6.500" stroke="#f4f4f4" strokeWidth="4" /><circle cx="10" cy="10" r="8.700" stroke="#ccc" strokeWidth=".6" /><path d="M3 3l4 4M17 3l-4 4M3 17l4-4M17 17l-4-4" stroke="#e8423a" strokeWidth="4.500" /><g stroke="#c8352c" fill="#fff"><circle cx="2.500" cy="2.500" r="1.800" /><circle cx="17.500" cy="2.500" r="1.800" /><circle cx="2.500" cy="17.500" r="1.800" /><circle cx="17.500" cy="17.500" r="1.800" /></g></svg>
);

const Explorer = () => (
  <Dock title="Explorateur">
    <DockTools>
      <MiniTool aria-label="Ajouter"><Svg s={14}><rect x="1" y="1" width="19" height="18" stroke="#777" strokeWidth="1.500" /><rect x="15" y="15" width="9" height="9" rx="2" fill="#57935a" /></Svg></MiniTool>
      <MiniTool aria-label="Rafraîchir"><Refresh s={14} /></MiniTool>
      <MiniTool aria-label="Filtrer"><Funnel s={14} /></MiniTool>
      <MiniTool aria-label="Replier"><TreeArrow s={14} /></MiniTool>
      <MiniTool aria-label="Propriétés"><Info s={14} /></MiniTool>
    </DockTools>
    <Box $h={106}>
      <Tree>
        <Node $h={16}><Twig plus /><Folder />Accueil</Node>
        <Node $h={20}><Twig /><Svg s={18}><path d="M12 1l3 8h8l-6 5 2 9-7-5-7 5 2-9-6-5h8z" fill="#eef0e6" stroke="#b5b9a5" strokeWidth="1.600" /></Svg>Favoris</Node>
        <Node $h={16}><Twig plus /><Folder />C:/</Node>
        <Node $h={16}><Twig plus /><Folder />D:/</Node>
        <Node $h={20}><Twig /><Svg s={18}><path d="M1 2q14 0 22 12-5 0-9 3-6-1-13 5Q7 12 1 2z" fill="#5b87bf" stroke="#2f4d72" /><path d="M7 3q5 7 1 14M12 6q4 6 1 11M17 9q2 4 0 6" stroke="#2f4d72" /></Svg>MSSQL</Node>
        <Node $h={20}><Twig /><Svg s={18}><rect x="1" y="4" width="22" height="16" rx="6" fill="#6b97c9" stroke="#2f4d72" strokeWidth="2" /></Svg>Oracle</Node>
      </Tree>
      <ScrollBar />
    </Box>
  </Dock>
);
const Layers = () => (
  <Dock title="Couches">
    <DockTools>
      <MiniTool aria-label="Ajouter un groupe"><Svg s={14}><path d="M1 8h13v14H1zM4 5h13v14M8 8V2q3-3 5 0v15" stroke="#777" strokeWidth="1.400" /><rect x="14" y="15" width="10" height="9" rx="2" fill="#57935a" /></Svg></MiniTool>
      <MiniTool aria-label="Visibilité"><Svg s={14}><path d="M0 9q11-12 22 0-11 10-22 0z" fill="#fff" stroke="#999" strokeWidth="1.500" /><circle cx="11" cy="8.500" r="5" fill="#6b97c9" /><circle cx="11" cy="8.500" r="2.200" fill="#222" /><path d="M12 17h12l-6 6z" fill="#000" /></Svg></MiniTool>
      <MiniTool aria-label="Filtrer"><Funnel s={14} /></MiniTool>
      <MiniTool aria-label="Filtrer par expression"><Svg s={14}><Epsilon /><path d="M12 12h11l-4 5v7h-3v-7z" fill="#b5b5b5" stroke="#999" /></Svg><Tri /></MiniTool>
      <MiniTool aria-label="Déplier"><TreeArrow s={14} down /></MiniTool>
      <MiniTool aria-label="Replier"><TreeArrow s={14} /></MiniTool>
      <MiniTool aria-label="Supprimer"><Svg s={14}><rect x="1" y="1" width="19" height="18" stroke="#777" strokeWidth="1.500" /><rect x="14" y="15" width="10" height="9" rx="2" fill="#e0574f" /><path d="M16 19.500h6" stroke="#fff" strokeWidth="2" /></Svg></MiniTool>
    </DockTools>
    <Box $h={196}>
      <Tree>
        <Node $h={16} $bold><Twig /><TableIco s={15} />distributeurs-attribut</Node>
        <Node $h={20} $bold $sel><Twig last /><Check defaultChecked aria-label="distributeurs-coord" /><Svg s={20}><circle cx="12" cy="12" r="6" fill="#9370e8" stroke="#4b3b6b" /></Svg>distributeurs-coord</Node>
      </Tree>
    </Box>
  </Dock>
);
const Path = () => (
  <Dock title="Chemin le plus court">
    <Form onSubmit={(e) => e.preventDefault()}>
      <Lbl $block htmlFor="dep">Départ</Lbl>
      <Row><Field id="dep" /><Push type="button" $w={30} $h={29} aria-label="Choisir le départ"><PickIcon /></Push></Row>
      <Gap $h={6} />
      <Lbl $block htmlFor="arr">Arrêt</Lbl>
      <Row><Field id="arr" /><Push type="button" $w={30} $h={29} aria-label="Choisir l'arrivée"><PickIcon /></Push></Row>
      <Gap $h={5} />
      <Row><Lbl $push htmlFor="crit">Critère</Lbl><Combo id="crit" w={147} value="Longueur" /></Row>
      <Row $gap={4}><Lbl htmlFor="lon">Longueur</Lbl><Field id="lon" /></Row>
      <Row $gap={4}><Lbl htmlFor="tmp">Temps</Lbl><Field id="tmp" /></Row>
      <Bottom>
        <Push type="button">Calculer</Push><Push type="button">Exporter</Push><Push type="button">Effacer</Push>
        <Push type="button" $h={31}><Buoy />Aide</Push>
      </Bottom>
    </Form>
  </Dock>
);

const Properties = () => (
  <Dialog $x={507} $y={197} $w={906} aria-label="Propriétés de la couche">
    <TitleBar $h={37} $pad={9}>
      <QLogo s={19} /><WinTitle>Propriétés de la couche - distributeurs-coord | Jointures</WinTitle>
      <Caption aria-label="Aide">?</Caption><Caption aria-label="Fermer"><CapIcon d={CROSS} /></Caption>
    </TitleBar>
    <Split>
      <Tabs>{tabs.map(([t, icon]) => <Tab key={t} href="#" $on={t === "Jointures"}><IcoBox>{icon}</IcoBox>{t}</Tab>)}</Tabs>
      <SplitV $w={6}><Dotted $v={192} /></SplitV>
      <Pane>
        <JoinBox>
          <JoinTable>
            <colgroup><col width="100" /><col width="100" /><col width="100" /><col width="100" /><col width="100" /><col /></colgroup>
            <thead><tr>{["Couche jointe", "Champ dans la couche jointe", "Champ dans la couche cible", "Mémoire cache", "Préfixe", "Jointure"].map((h) => <th key={h}><span>{h}</span></th>)}</tr></thead>
          </JoinTable>
        </JoinBox>
        <BtnRow $t={9}>
          <Push $w={35} $h={31} aria-label="Ajouter"><svg width="20" height="20" viewBox="0 0 20 20"><path d="M7 1h6v6h6v6h-6v6H7v-6H1V7h6z" fill="#e4f0e2" stroke="#4c8a50" strokeWidth="1.500" /><path d="M10 4v12M4 10h12" stroke="#4c8a50" strokeWidth="2" /></svg></Push>
          <Push $w={35} $h={31} aria-label="Supprimer"><svg width="20" height="20" viewBox="0 0 20 20"><rect x="1" y="6" width="18" height="8" fill="#fde3e1" stroke="#ee5a55" strokeWidth="1.500" /><path d="M4 10h12" stroke="#ee5a55" strokeWidth="2.500" /></svg></Push>
          <Push $w={35} $h={31} aria-label="Modifier"><svg width="20" height="20" viewBox="0 0 20 20"><path d="M4 19l1-6L12 1l4 2-7 13z" fill="#dccf3d" stroke="#8c8430" /><path d="M4 19l1-6 4 3z" fill="#777" /><path d="M12 1l4 2-1 2-4-2z" fill="#ddd" stroke="#999" /></svg></Push>
        </BtnRow>
        <BtnRow $t={6}>
          <Push $w={93} $gap={20}><Gap />Style<Tri $small /></Push><Spacer />
          <Push $w={93} $main>OK</Push><Push $w={93}>Annuler</Push><Push $w={93}>Appliquer</Push><Push $w={93}>Aide</Push>
        </BtnRow>
      </Pane>
    </Split>
  </Dialog>
);

const AddJoin = () => (
  <Dialog $x={707} $y={268} $w={507} $front aria-label="Ajouter une jointure vectorielle">
    <TitleBar $h={37} $pad={9} $active>
      <QLogo s={19} /><WinTitle>Ajouter une jointure vectorielle</WinTitle>
      <Caption aria-label="Aide">?</Caption><Caption aria-label="Fermer"><CapIcon d={CROSS} /></Caption>
    </TitleBar>
    <Body>
      <FormLine><Lbl htmlFor="j1">Joindre la couche</Lbl><Combo id="j1" w={238} h={26} pad={28} mark={<TableIco />} markX={7} value="distributeurs-attribut" /></FormLine>
      <FormLine><Lbl htmlFor="j2">Champ de jointure</Lbl><Combo id="j2" w={238} h={26} pad={28} mark="123" value="Id" /></FormLine>
      <FormLine><Lbl htmlFor="j3">Champ dans la couche cible</Lbl><Combo id="j3" w={238} h={26} pad={28} mark="123" value="Id" /></FormLine>
      <Gap $h={2} />
      <CheckLine><Check defaultChecked />Mettre la couche jointe en cache dans la mémoire virtuelle</CheckLine>
      <CheckLine $off><Check disabled />Créer un index des attributs sur le champ de la jointure</CheckLine>
      <Gap $h={8} />
      <GroupHead>
        <Expand aria-label="Replier"><Tri $c="#333" /></Expand><Check id="g1" defaultChecked /><label htmlFor="g1">Choisir les champs à joindre</label><hr />
      </GroupHead>
      <GroupBody>
        <FieldBox>
          <FieldList>{fields.map((f) => <li key={f}><label><Check defaultChecked />{f}</label></li>)}</FieldList>
          <ScrollBar />
        </FieldBox>
      </GroupBody>
      <Row $h={40}>
        <GroupHead $dark>
          <Expand aria-label="Déplier"><svg width="8" height="12" viewBox="0 0 8 12"><path d="M0 0l8 6-8 6z" fill="#333" /></svg></Expand><Check id="g2" /><label htmlFor="g2">Personnaliser le préfixe du champ</label><hr />
        </GroupHead>
      </Row>
      <BtnRow $t={5}><Spacer /><Push $w={93} $main>OK</Push><Push $w={93}>Annuler</Push></BtnRow>
    </Body>
  </Dialog>
);

const tasks = [
  ["Fichiers", 51, 11, <svg width="28" height="28" viewBox="0 0 28 28"><path d="M1 3h10l3 3v19H1z" fill="#e8a317" /><rect x="1" y="5" width="27" height="20" fill="#fcd462" /><path d="M6 26V16h18v10h-5v-5h-8v5z" fill="#3f93d9" /></svg>, 1],
  ["Firefox", 51, 11, <svg width="30" height="30" viewBox="0 0 30 30"><path d="M2 17C1 12 3 7 6 5l1 3 2-3 3 3 5-7q3 3 4 6l3 1q5 5 4 11c-1 7-7 10-13 10S3 24 2 17z" fill="#2ea0ee" /><path d="M6 17q0-7 7-8-4 4 0 7 5 2 8-1-1 8-8 8-6 0-7-6z" fill="#1a63d0" /><circle cx="15" cy="15" r="4.500" fill="#1f2f8f" /><path d="M22 7q7 9 1 16 2-8-3-13z" fill="#59e0ff" /></svg>, 1],
  ["Bloc-notes", 51, 6, <svg width="28" height="28" viewBox="0 0 28 28"><path d="M10 2l16 2-4 23-20-5z" fill="#8fc4cd" stroke="#d9e7ea" /><path d="M10 2l16 2-1 5-17-3z" fill="#e9f3f4" /><path d="M26 6l-3 21h2l2-20z" fill="#c79b3f" /></svg>, 1],
  ["QGIS", 61, 6, <QLogo s={28} />, 1, 1],
  ["Wolfram", 51, 11, <svg width="30" height="30" viewBox="0 0 30 30"><rect width="30" height="30" fill="#e21b0c" /><path d="M15 2l2 5 4-3 0 5 5-1-2 4 4 3-4 3 2 4-5-1v5l-4-3-2 5-2-5-4 3v-5l-5 1 2-4-4-3 4-3-2-4 5 1V4l4 3z" fill="#fff" /><path d="M10 9l5 3 5-3-1 7-4 5-4-5zM15 12v5M11 14l4 3 4-3" fill="none" stroke="#e21b0c" strokeWidth="1.400" /></svg>, 1],
  ["Notepad++", 51, 11, <svg width="28" height="28" viewBox="0 0 28 28"><path d="M2 3h20l2 24H2z" fill="#f7f7f7" stroke="#aaa" /><path d="M3 15h20v11H3z" fill="#7ccf2a" /><path d="M6 14q4-7 12-4l2 4-6 3q-6 2-8-3z" fill="#6cc02c" stroke="#1f4d14" /><path d="M7 22q5-6 13-1M8 12q5 6 11 0" stroke="#1f4d14" strokeWidth="1.500" fill="none" /><path d="M3 4h18" stroke="#888" strokeDasharray="1 1" strokeWidth="2" /><path d="M27 1l-7 19" stroke="#d99425" strokeWidth="2.500" /></svg>, 1],
  ["Paint", 51, 0, <svg width="30" height="30" viewBox="0 0 30 30"><path d="M1 19Q1 7 14 5q12 0 13 10t-9 13q-5 1-5-4-2-4-6-2-6 2-6-3z" fill="#c7dff0" stroke="#8fb3cc" /><circle cx="7" cy="13" r="2.300" fill="#d84040" /><circle cx="13" cy="9" r="2.300" fill="#5bb548" /><circle cx="20" cy="10" r="2.300" fill="#f1b52c" /><circle cx="6" cy="18" r="2" fill="#7b56c4" /><path d="M27 4L16 27" stroke="#d98a3a" strokeWidth="2.500" /><path d="M24 6l1-5h5l-2 7z" fill="#c9a27a" /></svg>, 1],
];

export default function App() {
  return (
    <Desktop>
      <Global />
      <TitleBar $pad={4} $end={6}>
        <QLogo s={17} /><WinTitle>QGIS 2.14.7-Essen</WinTitle>
        <Caption aria-label="Réduire"><CapIcon d="M1 7.500h12" /></Caption>
        <Caption aria-label="Agrandir"><CapIcon d="M1 3.500h9.500V13H1zM4 3V1h9v9h-2" /></Caption>
        <Caption aria-label="Fermer"><CapIcon d={CROSS} /></Caption>
      </TitleBar>
      <MenuBar>
        {["Projet", "Éditer", "Vue", "Couche", "Préférences", "Extension", "Vecteur", "Raster", "Base de données", "Internet", "Traitement", "Aide"].map((m) => <MenuLink key={m} href="#">{m}</MenuLink>)}
      </MenuBar>
      <Tools groups={row1} label="Fichier et navigation" />
      <Tools groups={row2} label="Numérisation et étiquettes" />
      <Main>
        <SideTools>
          <GripLine $h={5}><HGrip $w={48} /></GripLine>
          {layerTools.map(([n, icon, o = {}]) => <SideTool key={n} aria-label={n} $drop={o.drop}>{icon}{o.drop && <Tri />}</SideTool>)}
          <GripLine $h={15}><HGrip $w={48} /></GripLine>
          {pluginTools.map(([n, icon]) => <SideTool key={n} aria-label={n}>{icon}</SideTool>)}
        </SideTools>
        <Docks>
          <Explorer />
          <GripLine $h={7}><Dotted /></GripLine>
          <Layers />
          <GripLine $h={8}><Dotted /></GripLine>
          <Path />
        </Docks>
        <SplitV><Dotted $v={284} /></SplitV>
        <MapView aria-label="Carte">{pins.map(([x, y]) => <Pin key={x} $x={x - 380} $y={y - 134} />)}</MapView>
      </Main>
      <Status>
        <Lbl htmlFor="coord">Coordonnée</Lbl><Gap $w={3} />
        <FieldWrap><Field id="coord" $align="center" defaultValue="2.26780,48.86323" /></FieldWrap>
        <Push $w={20} $h={29} $main aria-label="Suivi de la souris"><svg width="16" height="18" viewBox="0 0 16 18" fill="none" stroke="#222" strokeWidth="1.300"><path d="M2 6q1-5 5-4l4 6q-1 4-5 3zM4 7l4-5M3 12l8 4q3-1 3-5l-4-4M15 2l-4 4M1 3l-1 2" /><circle cx="9" cy="12" r="3" /></svg></Push>
        <Gap $w={9} /><Lbl htmlFor="scale">Échelle</Lbl><Gap $w={12} />
        <Combo id="scale" w={98} white value="1:23 980" />
        <Gap $w={8} /><Lbl htmlFor="rot">Rotation</Lbl><Gap $w={8} />
        <Spin><Field id="rot" defaultValue="0,0" /><SpinCol><SpinBtn aria-label="Plus"><Tri $up $small /></SpinBtn><SpinBtn aria-label="Moins"><Tri $small /></SpinBtn></SpinCol></Spin>
        <Gap $w={6} /><CheckLine><Check defaultChecked />Rendu</CheckLine><Gap $w={18} />
        <Svg s={20}><circle cx="12" cy="12" r="11" fill="#c9c9c9" stroke="#888" strokeWidth="1.500" /><path d="M1 12h22M12 1v22M12 1c-8 6-8 16 0 22M12 1c8 6 8 16 0 22M12 3l9 9-9 9-9-9z" stroke="#777" /></Svg>
        <Gap $w={4} />EPSG:4326<Gap $w={22} />
        <Svg s={20}><ellipse cx="12" cy="10" rx="12" ry="9" fill="#5e5e5e" /><path d="M13 16l8 7v-9z" fill="#5e5e5e" /><circle cx="7" cy="10" r="1.600" fill="#fff" /><circle cx="12" cy="10" r="1.600" fill="#fff" /><circle cx="17" cy="10" r="1.600" fill="#fff" /></Svg>
      </Status>
      <TaskBar>
        <Task $w={60} aria-label="Démarrer"><svg width="20" height="20" viewBox="0 0 20 20" fill="#fff"><path d="M0 3l8-1.300V9.500H0zM9 1.500L20 0v9.500H9zM0 10.500h8v7.800L0 17zM9 10.500h11V20L9 18.500z" /></svg></Task>
        <Task $w={60} $m={9} aria-label="Vue des tâches"><svg width="20" height="20" viewBox="0 0 20 20" fill="none" stroke="#fff" strokeWidth="1.200"><path d="M1 0v3h12V0M1 20v-3h12v3M1 6h12v8H1zM18.500 0v4M18.500 10v10" /><path d="M17 7h3" strokeWidth="3" /></svg></Task>
        {tasks.map(([n, w, m, icon, open, on]) => <Task key={n} aria-label={n} $w={w} $m={m} $open={open} $on={on}>{icon}</Task>)}
        <Tray>
          <Weather>
            <svg width="32" height="32" viewBox="0 0 32 32"><path d="M13 2q-1 10-12 11 4 6 12 4t5-9z" fill="#f5a623" /><path d="M7 29q-6 0-6-6t7-6q3-6 9-4 5 1 6 5 8 0 8 6t-6 5z" fill="#b9cff5" /><path d="M7 29q-6 0-6-4 12 3 30-1 0 5-6 5z" fill="#8fb0ea" /><circle cx="24" cy="8" r="7.500" fill="#c42b1c" /><text x="21" y="12" fontSize="11" fontFamily="Open Sans" fill="#fff">1</text></svg>
            <span>10°C</span><span>Ciel couvert</span>
          </Weather>
          <svg width="18" height="20" viewBox="0 0 18 20" fill="none" stroke="#fff" strokeWidth="1.300"><path d="M1 14l8-8 8 8" /></svg><Gap $w={11} />
          <svg width="20" height="20" viewBox="0 0 20 20" fill="none" stroke="#fff" strokeWidth="1.200"><path d="M5 6h13v9H5z" /><path d="M7 8h9v5H7z" fill="#fff" /><path d="M19.500 9v3M1 3v3h4V3M3 6v4h2" /></svg><Gap $w={9} />
          <svg width="22" height="20" viewBox="0 0 22 20" fill="none" stroke="#fff" strokeWidth="1.200"><path d="M1 7h3l5-4v14l-5-4H1zM12 7q2 3 0 6M15 5q4 5 0 10M18 3q6 7 0 14" /></svg><Gap $w={10} />
          <svg width="18" height="20" viewBox="0 0 18 20" fill="none" stroke="#fff" strokeWidth="1.300"><path d="M1 17Q1 3 16 3" stroke="#888" /><path d="M5 17Q5 7 16 7M9 17q0-6 7-6" /><circle cx="15" cy="16" r="1.500" fill="#fff" /></svg>
          <Clock><span>20:16</span><span>24/02/2025</span></Clock>
          <svg width="22" height="22" viewBox="0 0 22 22" fill="none" stroke="#fff" strokeWidth="1.300"><path d="M1 2h20v15h-7l-3 3-3-3H1z" /></svg><Gap $w={24} />
          <svg width="1" height="50" viewBox="0 0 1 50"><rect width="1" height="50" fill="#666" /></svg>
        </Tray>
      </TaskBar>
      <Properties />
      <AddJoin />
      <Notes>
        <Ink width="1920" height="1080" fill="none" stroke={RED} strokeWidth="5" strokeLinecap="round">
          <ellipse cx="1082" cy="326" rx="150" ry="19" /><path d="M1235 326.500h59" />
          <ellipse cx="1080" cy="365" rx="156" ry="13" /><path d="M1238 364.500h56" />
          <ellipse cx="1083" cy="397.500" rx="155" ry="15" /><path d="M1241 397.500h53" />
          <ellipse cx="839" cy="479" rx="134" ry="17" /><path d="M975 479.500h321" />
          <ellipse cx="1051" cy="701" rx="68" ry="24.500" /><path d="M1118 709.500h172" />
        </Ink>
        <Note $x={1318} $y={308}>{"Choix de la table attributaire\nChoix du choix dans la table attributaire\nChoix du choix dans la couche dessin"}</Note>
        <Note $x={1318} $y={460}>{"Cocher l'option pour choisir les champs\nde la table attributaire que l'on souhaite\nlier à la couche dessin"}</Note>
        <Note $x={1298} $y={690}>Cliquer sur "OK pour valider"</Note>
      </Notes>
    </Desktop>
  );
}
